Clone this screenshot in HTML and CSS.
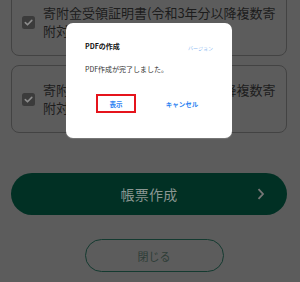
FILE: index.html
```html
<!DOCTYPE html>
<html lang="ja">
<head>
<meta charset="utf-8">
<link rel="stylesheet" href="styles.css">
</head>
<body>
<div class="page">
  <div class="list">
    <div class="card card-first">
      <span class="check"><svg width="13" height="13" viewBox="0 0 13 13"><rect width="13" height="13" rx="2.5" fill="#3b3b3b"/><path d="M3.3 6.6 L5.5 8.8 L9.8 4.4" fill="none" stroke="#8c8c8c" stroke-width="1.6" stroke-linecap="round" stroke-linejoin="round"/></svg></span>
      <span class="label">寄附金受領証明書(令和3年分以降複数寄附対応)</span>
    </div>
    <div class="card">
      <span class="check"><svg width="13" height="13" viewBox="0 0 13 13"><rect width="13" height="13" rx="2.5" fill="#3b3b3b"/><path d="M3.3 6.6 L5.5 8.8 L9.8 4.4" fill="none" stroke="#8c8c8c" stroke-width="1.6" stroke-linecap="round" stroke-linejoin="round"/></svg></span>
      <span class="label">寄附金受領証明書(令和3年分以降複数寄附対応)</span>
    </div>
  </div>
  <div class="primary">
    <span class="primary-text">帳票作成</span>
    <svg class="chev" width="8" height="12" viewBox="0 0 8 12"><path d="M1.5 1.2 L6 6 L1.5 10.8" fill="none" stroke="#767676" stroke-width="1.8"/></svg>
  </div>
  <div class="close-row">
    <div class="secondary">閉じる</div>
  </div>
</div>
<div class="dialog">
  <div class="dialog-head">
    <span class="dialog-title">PDFの作成</span>
    <span class="dialog-version">バージョン</span>
  </div>
  <p class="dialog-msg">PDF作成が完了しました。</p>
  <div class="dialog-actions">
    <div class="action"><span class="btn btn-show">表示</span></div>
    <div class="action"><span class="btn btn-cancel">キャンセル</span></div>
  </div>
</div>
</body>
</html>
```
FILE: styles.css
```css
html, body {
  margin: 0;
  padding: 0;
}
body {
  width: 300px;
  height: 282px;
  overflow: hidden;
  background: #5c5c5c;
  font-family: "Noto Sans CJK JP", "Noto Sans", sans-serif;
  position: relative;
}
.page {
  padding: 0 13px 0 11px;
}
.list {
  display: flex;
  flex-direction: column;
  gap: 9px;
  margin-top: -12px;
}
.card {
  height: 68px;
  box-sizing: border-box;
  border: 1px solid #434343;
  border-radius: 8px;
  display: flex;
  align-items: center;
  padding: 0 8px 0 10px;
  gap: 8px;
}
.check {
  width: 13px;
  height: 13px;
  flex: none;
  display: block;
}
.check svg { display: block; }
.label {
  flex: 1;
  font-size: 13px;
  line-height: 18px;
  color: #1c1c1c;
  margin-top: -1px;
}
.primary {
  margin-top: 40px;
  height: 42px;
  border-radius: 21px;
  background: #013024;
  display: flex;
  align-items: center;
  justify-content: center;
  position: relative;
}
.primary-text {
  font-size: 14px;
  color: #8a9692;
  letter-spacing: 0.3px;
}
.chev {
  position: absolute;
  right: 22px;
  top: 15px;
}
.close-row {
  display: flex;
  justify-content: center;
  margin-top: 24px;
  padding-left: 10px;
}
.secondary {
  width: 139px;
  height: 33px;
  box-sizing: border-box;
  border: 1px solid #143a30;
  border-radius: 17px;
  display: flex;
  align-items: center;
  justify-content: center;
  font-size: 11px;
  color: #2e3c37;
}
.dialog {
  position: absolute;
  left: 66px;
  top: 23px;
  width: 166px;
  height: 115px;
  box-sizing: border-box;
  background: #fff;
  border-radius: 7px;
  box-shadow: 0 1px 1px rgba(255,255,255,0.18);
  padding: 18px 19px 0 19px;
}
.dialog-head {
  display: flex;
  justify-content: space-between;
  align-items: center;
  height: 10px;
}
.dialog-title {
  font-size: 7px;
  font-weight: bold;
  color: #111;
  line-height: 10px;
}
.dialog-version {
  font-size: 5px;
  color: #8cbaf2;
  line-height: 10px;
  margin-top: 4px;
}
.dialog-msg {
  margin: 13px 0 0 0;
  font-size: 7px;
  line-height: 10px;
  color: #333;
}
.dialog-actions {
  display: flex;
  margin-top: 20px;
}
.action {
  flex: 1;
  display: flex;
  justify-content: center;
}
.btn {
  font-size: 6.5px;
  font-weight: bold;
  color: #2d83f2;
  display: flex;
  align-items: center;
  justify-content: center;
  height: 19px;
  box-sizing: border-box;
}
.btn-show {
  width: 40px;
  border: 2px solid #e5141c;
  margin-left: -2px;
}
.btn-cancel {
  margin-left: 2px;
}
```
